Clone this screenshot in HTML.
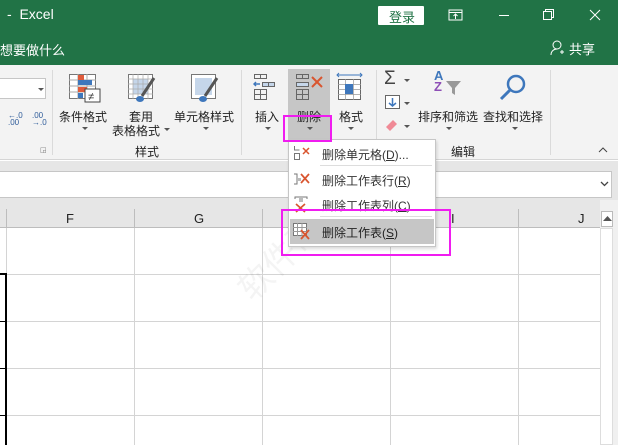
<!DOCTYPE html>
<html><head><meta charset="utf-8"><style>
*{margin:0;padding:0;box-sizing:border-box}
body{width:618px;height:445px;overflow:hidden;background:#fff;font-family:"Liberation Sans","Noto Sans CJK SC",sans-serif;position:relative;font-size:12px;color:#222}
.a{position:absolute}
.t{position:absolute;white-space:nowrap}
.w{color:#fff}
.arr{position:absolute;width:0;height:0;border-left:3px solid transparent;border-right:3px solid transparent;border-top:3px solid #555}
.vl{position:absolute;width:1px;background:#d4d4d4}
.hl{position:absolute;height:1px;background:#d4d4d4}
.r{font-size:12px}
</style></head><body>
<div class="a" style="left:0;top:0;width:618px;height:65px;background:#217346"></div>
<div class="t w" style="left:7px;top:6px;font-size:14px">-&nbsp; Excel</div>
<div class="a" style="left:378px;top:6px;width:46px;height:19px;background:#fff;border-radius:1px"></div>
<div class="t" style="left:389px;top:7px;font-size:13px;color:#217346">登录</div>
<svg class="a" style="left:448px;top:8px" width="16" height="14"><rect x="1" y="2" width="13" height="10" fill="none" stroke="#fff"/><line x1="1" y1="4.5" x2="14" y2="4.5" stroke="#fff"/><path d="M7.5 11V6M5.5 8l2-2 2 2" stroke="#fff" fill="none"/></svg>
<div class="a" style="left:499px;top:15px;width:10px;height:1px;background:#fff"></div>
<svg class="a" style="left:543px;top:9px" width="12" height="12"><rect x="0.5" y="2.5" width="8" height="8" fill="none" stroke="#fff"/><path d="M2.5 2.5V0.5h8v8h-2" fill="none" stroke="#fff"/></svg>
<svg class="a" style="left:589px;top:9px" width="12" height="12"><path d="M1 1l10 10M11 1L1 11" stroke="#fff"/></svg>
<div class="t w" style="left:0;top:40px;font-size:13px">想要做什么</div>
<svg class="a" style="left:550px;top:40px" width="14" height="16"><circle cx="7" cy="5" r="4" fill="none" stroke="#fff"/><path d="M1 15c0-4 3-6 6-6M10 12h4M12 10v4" stroke="#fff" fill="none"/></svg>
<div class="t w" style="left:569px;top:39px;font-size:13px">共享</div>

<div class="a" style="left:0;top:65px;width:618px;height:95px;background:#f3f3f3;border-bottom:1px solid #d5d5d5"></div>
<div class="a" style="left:0;top:78px;width:46px;height:21px;background:#fff;border:1px solid #c6c6c6;border-left:none"></div>
<div class="arr" style="left:38px;top:88px"></div>
<div class="t" style="left:8px;top:112px;font-size:8px;color:#2f5c9a;line-height:7px">←.0<br>.00</div>
<div class="t" style="left:32px;top:112px;font-size:8px;color:#2f5c9a;line-height:7px">.00<br>→.0</div>
<div class="a" style="left:52px;top:70px;width:1px;height:85px;background:#dadada"></div>
<div class="t" style="left:40px;top:146px;font-size:7px;color:#777">◲</div>
<svg class="a" style="left:69px;top:74px" width="32" height="30"><rect x="0.5" y="0.5" width="26" height="24" fill="#fff" stroke="#777"/><path d="M0 6h27M0 12h27M0 18h27M9 0v25M18 0v25" stroke="#aaa"/><rect x="9" y="1" width="6" height="5" fill="#e05b3b"/><rect x="9" y="6" width="14" height="5" fill="#3e77bc"/><rect x="9" y="13" width="9" height="5" fill="#e05b3b"/><rect x="9" y="19" width="5" height="5" fill="#3e77bc"/><rect x="16" y="15" width="15" height="13" fill="#fff" stroke="#444"/><text x="19" y="26" font-size="11" fill="#333">≠</text></svg>
<div class="t r" style="left:59px;top:108px">条件格式</div>
<div class="arr" style="left:82px;top:127px"></div>
<svg class="a" style="left:128px;top:74px" width="28" height="30"><rect x="0.5" y="0.5" width="24" height="24" fill="#fff" stroke="#777"/><rect x="5" y="5" width="15" height="15" fill="#c5d6ea"/><path d="M0 5h25M0 10h25M0 15h25M0 20h25M5 0v25M10 0v25M15 0v25M20 0v25" stroke="#aaa" stroke-width=".7"/><path d="M26 4L14 22" stroke="#555" stroke-width="3"/><ellipse cx="12" cy="25" rx="4" ry="3" fill="#3e77bc"/></svg>
<div class="t r" style="left:129px;top:108px">套用</div>
<div class="t r" style="left:112px;top:122px">表格格式</div>
<div class="arr" style="left:164px;top:128px"></div>
<svg class="a" style="left:191px;top:74px" width="28" height="30"><rect x="0.5" y="0.5" width="24" height="24" fill="#fff" stroke="#777"/><rect x="4" y="4" width="17" height="17" fill="#c5d6ea"/><path d="M26 4L14 22" stroke="#555" stroke-width="3"/><ellipse cx="12" cy="25" rx="4" ry="3" fill="#3e77bc"/></svg>
<div class="t r" style="left:174px;top:108px">单元格样式</div>
<div class="arr" style="left:203px;top:127px"></div>
<div class="t r" style="left:135px;top:143px">样式</div>
<div class="a" style="left:241px;top:70px;width:1px;height:85px;background:#dadada"></div>
<svg class="a" style="left:253px;top:74px" width="28" height="30"><rect x="1.5" y="0.5" width="6" height="4" fill="none" stroke="#666"/><rect x="7.5" y="0.5" width="6" height="4" fill="none" stroke="#666"/><path d="M7 10H1M3 8l-2 2 2 2" stroke="#3e77bc" fill="none" stroke-width="1.5"/><rect x="9.5" y="8.5" width="6" height="4" fill="#c5d6ea" stroke="#666"/><rect x="15.5" y="8.5" width="6" height="4" fill="#c5d6ea" stroke="#666"/><rect x="1.5" y="15.5" width="12" height="10" fill="none" stroke="#666"/><path d="M1 20.5h13M7.5 15v11" stroke="#666"/></svg>
<div class="t r" style="left:255px;top:108px">插入</div>
<div class="arr" style="left:265px;top:127px"></div>
<div class="a" style="left:288px;top:69px;width:42px;height:71px;background:#c6c6c6"></div>
<svg class="a" style="left:295px;top:74px" width="30" height="30"><rect x="1.5" y="0.5" width="6" height="4" fill="none" stroke="#666"/><rect x="7.5" y="0.5" width="6" height="4" fill="none" stroke="#666"/><rect x="1.5" y="8.5" width="12" height="4" fill="#c5d6ea" stroke="#666"/><rect x="1.5" y="15.5" width="12" height="10" fill="none" stroke="#666"/><path d="M1 20.5h13M7.5 15v11" stroke="#666"/><path d="M17 3l10 10M27 3L17 13" stroke="#d9552f" stroke-width="2"/></svg>
<div class="t r" style="left:297px;top:108px">删除</div>
<div class="arr" style="left:307px;top:127px"></div>
<svg class="a" style="left:336px;top:72px" width="30" height="32"><path d="M1 3h25M3 1l-2 2 2 2M24 1l2 2-2 2" stroke="#3e77bc" fill="none"/><rect x="2.5" y="7.5" width="22" height="20" fill="#fff" stroke="#666"/><path d="M2 12.5h23M2 17.5h23M2 22.5h23M9.5 7v21M17.5 7v21" stroke="#999" stroke-width=".7"/><rect x="9" y="12" width="8" height="10" fill="#3e77bc"/></svg>
<div class="t r" style="left:339px;top:108px">格式</div>
<div class="arr" style="left:348px;top:127px"></div>
<div class="a" style="left:376px;top:70px;width:1px;height:85px;background:#dadada"></div>
<div class="t" style="left:384px;top:68px;font-size:19px;color:#444">Σ</div>
<div class="arr" style="left:404px;top:79px"></div>
<svg class="a" style="left:385px;top:95px" width="16" height="15"><rect x="0.5" y="0.5" width="14" height="13" fill="#fff" stroke="#666"/><path d="M7.5 3v8M4 8l3.5 3 3.5-3" stroke="#3e77bc" stroke-width="1.5" fill="none"/></svg>
<div class="arr" style="left:404px;top:102px"></div>
<svg class="a" style="left:384px;top:117px" width="16" height="14"><path d="M2 10l7-7 4 4-7 7z" fill="#f08a96"/></svg>
<div class="arr" style="left:404px;top:125px"></div>
<div class="t" style="left:434px;top:70px;font-size:13px;color:#3e77bc;font-weight:bold;line-height:11px">A<br><span style="color:#8e4fb6">Z</span></div>
<svg class="a" style="left:445px;top:80px" width="18" height="16"><path d="M1 1h15l-6 7v7l-3-2V8z" fill="#999"/></svg>
<div class="t r" style="left:418px;top:108px">排序和筛选</div>
<div class="arr" style="left:446px;top:127px"></div>
<svg class="a" style="left:498px;top:73px" width="30" height="30"><circle cx="18" cy="11" r="8" fill="none" stroke="#3e77bc" stroke-width="2.5"/><path d="M12 17L3 26" stroke="#3e77bc" stroke-width="3"/></svg>
<div class="t r" style="left:483px;top:108px">查找和选择</div>
<div class="arr" style="left:512px;top:127px"></div>
<div class="t r" style="left:451px;top:143px">编辑</div>
<div class="a" style="left:550px;top:70px;width:1px;height:85px;background:#dadada"></div>
<svg class="a" style="left:598px;top:147px" width="10" height="6"><path d="M1 5l4-4 4 4" stroke="#444" fill="none"/></svg>

<div class="a" style="left:0;top:161px;width:618px;height:39px;background:#e6e6e6"></div>
<div class="a" style="left:0;top:171px;width:612px;height:27px;background:#fff;border:1px solid #c6c6c6;border-left:none"></div>
<svg class="a" style="left:600px;top:181px" width="9" height="6"><path d="M1 1l3.5 3.5L8 1" stroke="#444" fill="none" stroke-width="1.3"/></svg>
<div class="a" style="left:0;top:200px;width:600px;height:28px;background:#e6e6e6;border-bottom:1px solid #bdbdbd"></div>
<div class="a" style="left:6px;top:209px;width:1px;height:19px;background:#bdbdbd"></div>
<div class="a" style="left:134px;top:209px;width:1px;height:19px;background:#bdbdbd"></div>
<div class="a" style="left:262px;top:209px;width:1px;height:19px;background:#bdbdbd"></div>
<div class="a" style="left:390px;top:209px;width:1px;height:19px;background:#bdbdbd"></div>
<div class="a" style="left:518px;top:209px;width:1px;height:19px;background:#bdbdbd"></div>
<div class="t" style="left:66px;top:211px;font-size:13px">F</div>
<div class="t" style="left:194px;top:211px;font-size:13px">G</div>
<div class="t" style="left:451px;top:211px;font-size:13px">I</div>
<div class="t" style="left:578px;top:211px;font-size:13px">J</div>
<div class="a" style="left:600px;top:200px;width:18px;height:245px;background:#f0f0f0"></div>
<div class="a" style="left:601px;top:211px;width:12px;height:16px;background:#fff;border:1px solid #bbb"></div>
<svg class="a" style="left:603px;top:216px" width="9" height="5"><path d="M0 5l4.5-5L9 5z" fill="#555"/></svg>
<div class="a" style="left:600px;top:228px;width:13px;height:217px;background:#fff;border:1px solid #ddd"></div>
<div class="vl" style="left:6px;top:228px;height:217px"></div>
<div class="vl" style="left:134px;top:228px;height:217px"></div>
<div class="vl" style="left:262px;top:228px;height:217px"></div>
<div class="vl" style="left:390px;top:228px;height:217px"></div>
<div class="vl" style="left:518px;top:228px;height:217px"></div>
<div class="hl" style="left:0;top:274px;width:600px"></div>
<div class="hl" style="left:0;top:321px;width:600px"></div>
<div class="hl" style="left:0;top:368px;width:600px"></div>
<div class="hl" style="left:0;top:415px;width:600px"></div>
<div class="a" style="left:0;top:273px;width:7px;height:172px;border-right:2px solid #000;border-top:2px solid #000"></div>
<div class="a" style="left:0;top:321px;width:6px;height:1px;background:#000"></div>
<div class="a" style="left:0;top:368px;width:6px;height:1px;background:#000"></div>
<div class="a" style="left:0;top:415px;width:6px;height:1px;background:#000"></div>
<div class="t" style="left:225px;top:275px;font-size:34px;color:rgba(0,0,0,0.045);transform:rotate(-45deg);transform-origin:left top">软件帮</div>

<div class="a" style="left:288px;top:139px;width:148px;height:108px;background:#fff;border:1px solid #c6c6c6;box-shadow:1px 2px 3px rgba(0,0,0,.15)"></div>
<div class="a" style="left:290px;top:219px;width:144px;height:25px;background:#c6c6c6"></div>
<div class="a" style="left:320px;top:165px;width:112px;height:1px;background:#ddd"></div>
<div class="a" style="left:320px;top:216px;width:112px;height:1px;background:#ddd"></div>
<div class="t" style="left:322px;top:146px;font-size:12px;color:#333">删除单元格(<u>D</u>)...</div>
<div class="t" style="left:322px;top:172px;font-size:12px;color:#333">删除工作表行(<u>R</u>)</div>
<div class="t" style="left:322px;top:197px;font-size:12px;color:#333">删除工作表列(<u>C</u>)</div>
<div class="t" style="left:322px;top:224px;font-size:12px;color:#222">删除工作表(<u>S</u>)</div>
<svg class="a" style="left:293px;top:145px" width="18" height="16"><path d="M1.5 1v4h5M1.5 8.5h5v6h-5z" stroke="#777" fill="none"/><path d="M10 3l6 6M16 3l-6 6" stroke="#d9552f" stroke-width="1.5"/></svg>
<svg class="a" style="left:293px;top:172px" width="18" height="16"><path d="M1 2h3v10H1" stroke="#777" fill="none"/><rect x="4" y="6" width="4" height="3" fill="#bbb"/><path d="M8 2l8 9M16 2l-8 9" stroke="#d9552f" stroke-width="1.7"/></svg>
<svg class="a" style="left:293px;top:196px" width="18" height="18"><path d="M2 3V1h12v2" stroke="#777" fill="none"/><rect x="6" y="1" width="4" height="5" fill="#bbb"/><path d="M3 8l9 8M12 8l-9 8" stroke="#d9552f" stroke-width="1.7"/></svg>
<svg class="a" style="left:293px;top:223px" width="18" height="17"><rect x="0.5" y="0.5" width="13" height="12" fill="#fff" stroke="#777"/><path d="M0 4.5h14M0 8.5h14M4.5 0v13M9 0v13" stroke="#999"/><path d="M8 7l8 9M16 7l-8 9" stroke="#d9552f" stroke-width="1.8"/></svg>
<div class="a" style="left:283px;top:115px;width:49px;height:27px;border:2px solid #f01cf0"></div>
<div class="a" style="left:281px;top:209px;width:170px;height:47px;border:2px solid #f01cf0"></div>
</body></html>
